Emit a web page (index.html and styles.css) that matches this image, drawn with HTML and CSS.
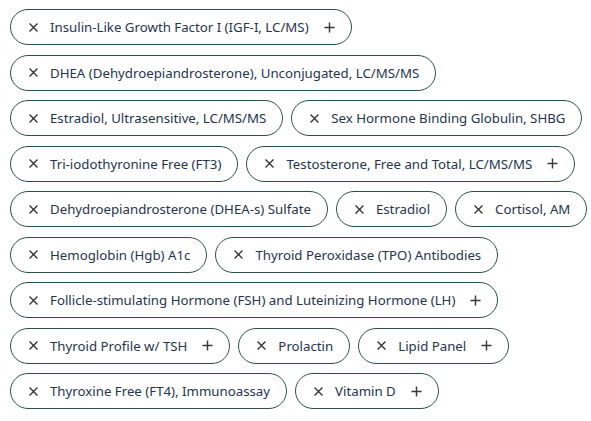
FILE: index.html
```html
<!DOCTYPE html>
<html lang="en">
<head>
<meta charset="utf-8">
<title>Selected tests</title>
<link rel="stylesheet" href="styles.css">
</head>
<body>
<div class="chips">
  <div class="row">
    <span class="chip"><svg class="x" viewBox="0 0 10 10"><path d="M0.6 0.6L9.4 9.4M9.4 0.6L0.6 9.4"/></svg><span class="label">Insulin-Like Growth Factor I (IGF-I, LC/MS)</span><svg class="plus" viewBox="0 0 12 12"><path d="M6 0.5V11.5M0.5 6H11.5"/></svg></span>
  </div>
  <div class="row">
    <span class="chip"><svg class="x" viewBox="0 0 10 10"><path d="M0.6 0.6L9.4 9.4M9.4 0.6L0.6 9.4"/></svg><span class="label">DHEA (Dehydroepiandrosterone), Unconjugated, LC/MS/MS</span></span>
  </div>
  <div class="row">
    <span class="chip"><svg class="x" viewBox="0 0 10 10"><path d="M0.6 0.6L9.4 9.4M9.4 0.6L0.6 9.4"/></svg><span class="label">Estradiol, Ultrasensitive, LC/MS/MS</span></span>
    <span class="chip"><svg class="x" viewBox="0 0 10 10"><path d="M0.6 0.6L9.4 9.4M9.4 0.6L0.6 9.4"/></svg><span class="label">Sex Hormone Binding Globulin, SHBG</span></span>
  </div>
  <div class="row">
    <span class="chip"><svg class="x" viewBox="0 0 10 10"><path d="M0.6 0.6L9.4 9.4M9.4 0.6L0.6 9.4"/></svg><span class="label">Tri-iodothyronine Free (FT3)</span></span>
    <span class="chip"><svg class="x" viewBox="0 0 10 10"><path d="M0.6 0.6L9.4 9.4M9.4 0.6L0.6 9.4"/></svg><span class="label">Testosterone, Free and Total, LC/MS/MS</span><svg class="plus" viewBox="0 0 12 12"><path d="M6 0.5V11.5M0.5 6H11.5"/></svg></span>
  </div>
  <div class="row">
    <span class="chip"><svg class="x" viewBox="0 0 10 10"><path d="M0.6 0.6L9.4 9.4M9.4 0.6L0.6 9.4"/></svg><span class="label">Dehydroepiandrosterone (DHEA-s) Sulfate</span></span>
    <span class="chip"><svg class="x" viewBox="0 0 10 10"><path d="M0.6 0.6L9.4 9.4M9.4 0.6L0.6 9.4"/></svg><span class="label">Estradiol</span></span>
    <span class="chip"><svg class="x" viewBox="0 0 10 10"><path d="M0.6 0.6L9.4 9.4M9.4 0.6L0.6 9.4"/></svg><span class="label">Cortisol, AM</span></span>
  </div>
  <div class="row">
    <span class="chip"><svg class="x" viewBox="0 0 10 10"><path d="M0.6 0.6L9.4 9.4M9.4 0.6L0.6 9.4"/></svg><span class="label">Hemoglobin (Hgb) A1c</span></span>
    <span class="chip"><svg class="x" viewBox="0 0 10 10"><path d="M0.6 0.6L9.4 9.4M9.4 0.6L0.6 9.4"/></svg><span class="label">Thyroid Peroxidase (TPO) Antibodies</span></span>
  </div>
  <div class="row">
    <span class="chip"><svg class="x" viewBox="0 0 10 10"><path d="M0.6 0.6L9.4 9.4M9.4 0.6L0.6 9.4"/></svg><span class="label">Follicle-stimulating Hormone (FSH) and Luteinizing Hormone (LH)</span><svg class="plus" viewBox="0 0 12 12"><path d="M6 0.5V11.5M0.5 6H11.5"/></svg></span>
  </div>
  <div class="row">
    <span class="chip"><svg class="x" viewBox="0 0 10 10"><path d="M0.6 0.6L9.4 9.4M9.4 0.6L0.6 9.4"/></svg><span class="label">Thyroid Profile w/ TSH</span><svg class="plus" viewBox="0 0 12 12"><path d="M6 0.5V11.5M0.5 6H11.5"/></svg></span>
    <span class="chip"><svg class="x" viewBox="0 0 10 10"><path d="M0.6 0.6L9.4 9.4M9.4 0.6L0.6 9.4"/></svg><span class="label">Prolactin</span></span>
    <span class="chip"><svg class="x" viewBox="0 0 10 10"><path d="M0.6 0.6L9.4 9.4M9.4 0.6L0.6 9.4"/></svg><span class="label">Lipid Panel</span><svg class="plus" viewBox="0 0 12 12"><path d="M6 0.5V11.5M0.5 6H11.5"/></svg></span>
  </div>
  <div class="row">
    <span class="chip"><svg class="x" viewBox="0 0 10 10"><path d="M0.6 0.6L9.4 9.4M9.4 0.6L0.6 9.4"/></svg><span class="label">Thyroxine Free (FT4), Immunoassay</span></span>
    <span class="chip"><svg class="x" viewBox="0 0 10 10"><path d="M0.6 0.6L9.4 9.4M9.4 0.6L0.6 9.4"/></svg><span class="label">Vitamin D</span><svg class="plus" viewBox="0 0 12 12"><path d="M6 0.5V11.5M0.5 6H11.5"/></svg></span>
  </div>
</div>
</body>
</html>
```
FILE: styles.css
```css
html, body {
  margin: 0;
  background: #ffffff;
}
body {
  font-family: "Noto Sans", "Open Sans", sans-serif;
  font-size: 13.25px;
  color: #26344f;
}
.chips {
  display: flex;
  flex-direction: column;
  row-gap: 9.5px;
  padding: 9px 10px;
}
.row {
  display: flex;
  column-gap: 8px;
}
.chip {
  box-sizing: border-box;
  height: 36px;
  display: inline-flex;
  align-items: center;
  border: 1px solid #2b5045;
  border-radius: 18px;
  padding: 0 16px 0 18px;
  white-space: nowrap;
}
.x {
  width: 9px;
  height: 9px;
  margin-right: 12px;
  flex: none;
}
.x path {
  stroke: #333333;
  stroke-width: 1.5;
  fill: none;
}
.plus {
  width: 11px;
  height: 11px;
  margin-left: 15px;
  flex: none;
}
.plus path {
  stroke: #3a3a3a;
  stroke-width: 1.6;
  fill: none;
}
.label {
  line-height: 20px;
}
```
